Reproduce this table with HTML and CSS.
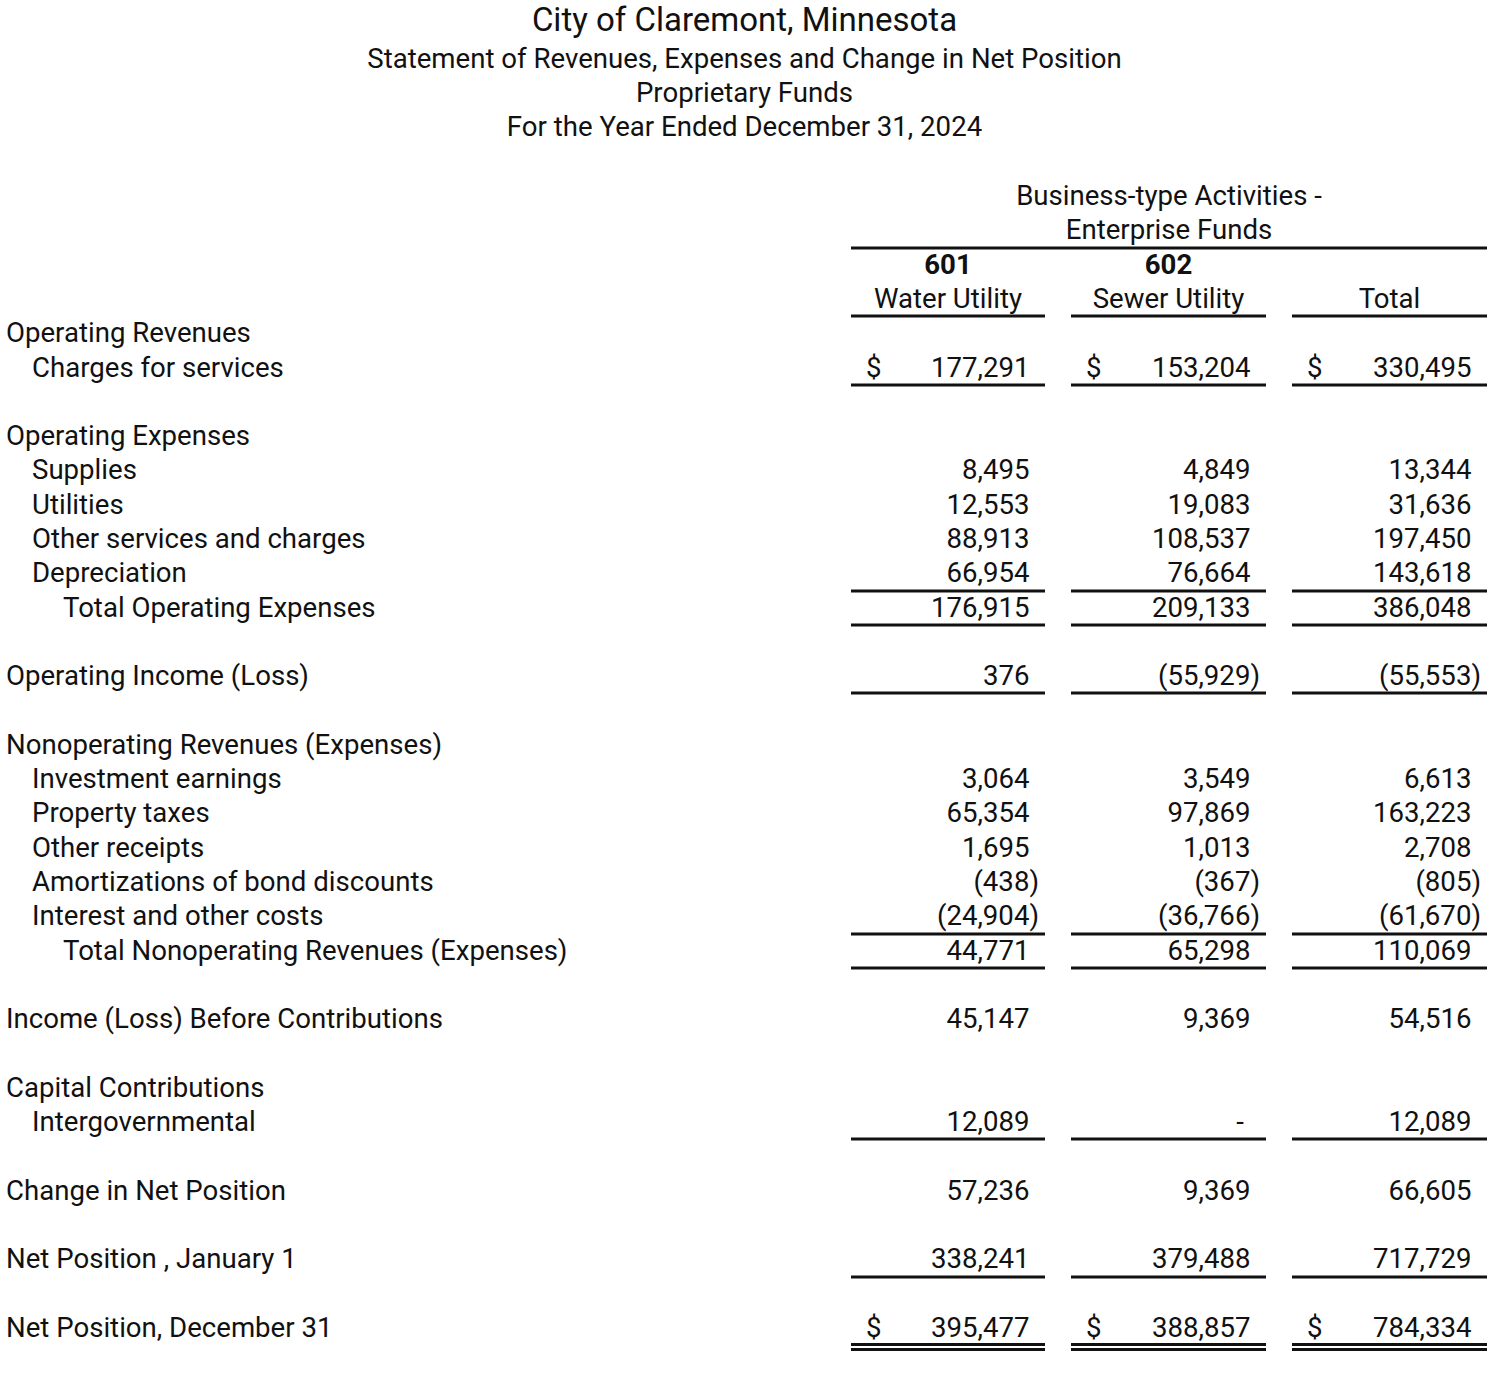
FILE: index.html
```html
<!DOCTYPE html>
<html lang="en">
<head>
<meta charset="utf-8">
<title>City of Claremont, Minnesota - Statement of Revenues, Expenses and Change in Net Position</title>
<link rel="stylesheet" href="styles.css">
</head>
<body>
<div class="page">
  <header class="titles">
    <h1 class="title">City of Claremont, Minnesota</h1>
    <div class="sub">Statement of Revenues, Expenses and Change in Net Position</div>
    <div class="sub">Proprietary Funds</div>
    <div class="sub">For the Year Ended December 31, 2024</div>
    <div class="sub"></div>
  </header>

  <div class="row">
    <div></div>
    <div class="span3 center">Business-type Activities -</div>
  </div>
  <div class="row">
    <div></div>
    <div class="span3 center ul">Enterprise Funds</div>
  </div>
  <div class="row">
    <div></div>
    <div class="center bold">601</div>
    <div class="center bold">602</div>
    <div></div>
  </div>
  <div class="row">
    <div></div>
    <div class="center ul">Water Utility</div>
    <div class="center ul">Sewer Utility</div>
    <div class="center ul">Total</div>
  </div>

  <div class="row"><div class="lbl">Operating Revenues</div></div>
  <div class="row">
    <div class="lbl i1">Charges for services</div>
    <div class="num ul"><span>$</span><span class="p">177,291</span></div>
    <div class="num ul"><span>$</span><span class="p">153,204</span></div>
    <div class="num ul"><span>$</span><span class="p">330,495</span></div>
  </div>
  <div class="row"></div>

  <div class="row"><div class="lbl">Operating Expenses</div></div>
  <div class="row">
    <div class="lbl i1">Supplies</div>
    <div class="num"><span class="p">8,495</span></div>
    <div class="num"><span class="p">4,849</span></div>
    <div class="num"><span class="p">13,344</span></div>
  </div>
  <div class="row">
    <div class="lbl i1">Utilities</div>
    <div class="num"><span class="p">12,553</span></div>
    <div class="num"><span class="p">19,083</span></div>
    <div class="num"><span class="p">31,636</span></div>
  </div>
  <div class="row">
    <div class="lbl i1">Other services and charges</div>
    <div class="num"><span class="p">88,913</span></div>
    <div class="num"><span class="p">108,537</span></div>
    <div class="num"><span class="p">197,450</span></div>
  </div>
  <div class="row">
    <div class="lbl i1">Depreciation</div>
    <div class="num ul"><span class="p">66,954</span></div>
    <div class="num ul"><span class="p">76,664</span></div>
    <div class="num ul"><span class="p">143,618</span></div>
  </div>
  <div class="row">
    <div class="lbl i2">Total Operating Expenses</div>
    <div class="num ul"><span class="p">176,915</span></div>
    <div class="num ul"><span class="p">209,133</span></div>
    <div class="num ul"><span class="p">386,048</span></div>
  </div>
  <div class="row"></div>

  <div class="row">
    <div class="lbl">Operating Income (Loss)</div>
    <div class="num ul"><span class="p">376</span></div>
    <div class="num ul"><span>(55,929)</span></div>
    <div class="num ul"><span>(55,553)</span></div>
  </div>
  <div class="row"></div>

  <div class="row"><div class="lbl">Nonoperating Revenues (Expenses)</div></div>
  <div class="row">
    <div class="lbl i1">Investment earnings</div>
    <div class="num"><span class="p">3,064</span></div>
    <div class="num"><span class="p">3,549</span></div>
    <div class="num"><span class="p">6,613</span></div>
  </div>
  <div class="row">
    <div class="lbl i1">Property taxes</div>
    <div class="num"><span class="p">65,354</span></div>
    <div class="num"><span class="p">97,869</span></div>
    <div class="num"><span class="p">163,223</span></div>
  </div>
  <div class="row">
    <div class="lbl i1">Other receipts</div>
    <div class="num"><span class="p">1,695</span></div>
    <div class="num"><span class="p">1,013</span></div>
    <div class="num"><span class="p">2,708</span></div>
  </div>
  <div class="row">
    <div class="lbl i1">Amortizations of bond discounts</div>
    <div class="num"><span>(438)</span></div>
    <div class="num"><span>(367)</span></div>
    <div class="num"><span>(805)</span></div>
  </div>
  <div class="row">
    <div class="lbl i1">Interest and other costs</div>
    <div class="num ul"><span>(24,904)</span></div>
    <div class="num ul"><span>(36,766)</span></div>
    <div class="num ul"><span>(61,670)</span></div>
  </div>
  <div class="row">
    <div class="lbl i2">Total Nonoperating Revenues (Expenses)</div>
    <div class="num ul"><span class="p">44,771</span></div>
    <div class="num ul"><span class="p">65,298</span></div>
    <div class="num ul"><span class="p">110,069</span></div>
  </div>
  <div class="row"></div>

  <div class="row">
    <div class="lbl">Income (Loss) Before Contributions</div>
    <div class="num"><span class="p">45,147</span></div>
    <div class="num"><span class="p">9,369</span></div>
    <div class="num"><span class="p">54,516</span></div>
  </div>
  <div class="row"></div>

  <div class="row"><div class="lbl">Capital Contributions</div></div>
  <div class="row">
    <div class="lbl i1">Intergovernmental</div>
    <div class="num ul"><span class="p">12,089</span></div>
    <div class="num ul"><span class="dash">-</span></div>
    <div class="num ul"><span class="p">12,089</span></div>
  </div>
  <div class="row"></div>

  <div class="row">
    <div class="lbl">Change in Net Position</div>
    <div class="num"><span class="p">57,236</span></div>
    <div class="num"><span class="p">9,369</span></div>
    <div class="num"><span class="p">66,605</span></div>
  </div>
  <div class="row"></div>

  <div class="row">
    <div class="lbl">Net Position , January 1</div>
    <div class="num ul"><span class="p">338,241</span></div>
    <div class="num ul"><span class="p">379,488</span></div>
    <div class="num ul"><span class="p">717,729</span></div>
  </div>
  <div class="row"></div>

  <div class="row last">
    <div class="lbl">Net Position, December 31</div>
    <div class="num dbl"><span>$</span><span class="p">395,477</span></div>
    <div class="num dbl"><span>$</span><span class="p">388,857</span></div>
    <div class="num dbl"><span>$</span><span class="p">784,334</span></div>
  </div>
</div>
</body>
</html>
```
FILE: styles.css
```css
html, body {
  margin: 0;
  padding: 0;
  background: #fff;
}

body {
  font-family: Roboto, "Liberation Sans", sans-serif;
  color: #111;
  font-size: 27.6px;
}

.page {
  width: 1500px;
  box-sizing: border-box;
  padding: 1px 13px 26px 6px;
}

.titles {
  text-align: center;
  margin-right: 4px;
}

.title {
  margin: -1px 0 0;
  font-weight: 400;
  font-size: 33px;
  height: 41.85px;
  line-height: 40px;
}

.sub {
  font-size: 27.6px;
  height: 34.3px;
  line-height: 34.3px;
}

.row {
  display: grid;
  grid-template-columns: 1fr 194px 195px 195px;
  column-gap: 26px;
  height: 34.3px;
  line-height: 34.3px;
  white-space: nowrap;
}

.row.last {
  height: auto;
  align-items: start;
}

.span3 {
  grid-column: 2 / 5;
}

.center {
  text-align: center;
}

.bold {
  font-weight: 700;
}

.lbl.i1 {
  padding-left: 26px;
}

.lbl.i2 {
  padding-left: 57px;
}

.num {
  display: flex;
  justify-content: space-between;
  padding: 0 6px 0 15px;
}

.num > span:last-child {
  margin-left: auto;
}

.num .p {
  padding-right: 9.5px;
}

.num .dash {
  padding-right: 16px;
}

.ul {
  box-shadow: inset 0 -1.5px 0 #111, 0 1.5px 0 #111;
}

.dbl {
  height: 32.3px;
  border-bottom: 8px double #111;
}
```
